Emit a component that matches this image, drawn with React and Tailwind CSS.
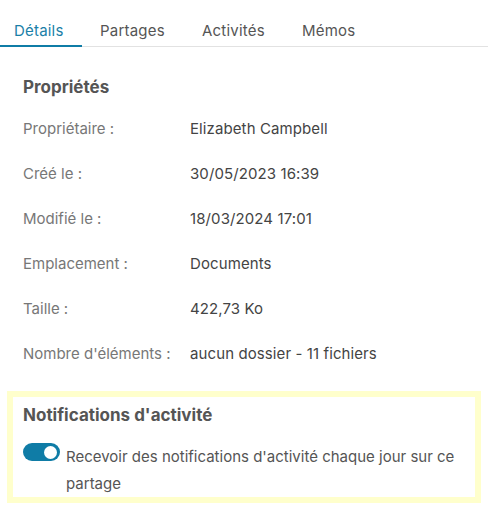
const TABS = [
  { label: "Détails", w: "w-[82px]" },
  { label: "Partages", w: "w-[102px]" },
  { label: "Activités", w: "w-[100px]" },
  { label: "Mémos", w: "w-[90px]" },
];

const PROPRIETES = [
  ["Propriétaire :", "Elizabeth Campbell"],
  ["Créé le :", "30/05/2023 16:39"],
  ["Modifié le :", "18/03/2024 17:01"],
  ["Emplacement :", "Documents"],
  ["Taille :", "422,73 Ko"],
  ["Nombre d'éléments :", "aucun dossier - 11 fichiers"],
];

export default function App() {
  return (
    <div className="w-[488px] h-[511px] bg-white font-['Inter',sans-serif] text-[#555]">
      {/* Onglets */}
      <div className="flex h-[47px] border-b border-[#e2e2e2] pt-[20px]">
        {TABS.map((t, i) => (
          <div
            key={t.label}
            className={
              i === 0
                ? "w-[82px] pl-[14px] text-[15px] tracking-[0.2px] text-[#1a7fa8] border-b-2 border-[#0f7ca6] -mb-px"
                : `${t.w} pl-[18px] text-[15px] tracking-[0.2px] text-[#555]`
            }
          >
            {t.label}
          </div>
        ))}
      </div>

      <div className="px-[23px] pt-[28px]">
        <h3 className="text-[17px] font-bold text-[#555] leading-[24px]">Propriétés</h3>
        <div className="mt-[20px]">
          {PROPRIETES.map(([k, v]) => (
            <div key={k} className="flex h-[45px] items-start text-[15px] leading-[20px]">
              <span className="w-[167px] text-[#777]">{k}</span>
              <span className="text-[#444] tracking-[0.1px]">{v}</span>
            </div>
          ))}
        </div>
      </div>

      <div className="mx-[7px] mt-[2px] border-[6px] border-[#ffffcc] px-[10px] pt-[6px] pb-0">
        <h3 className="text-[17px] font-bold text-[#555] leading-[24px]">Notifications d'activité</h3>
        <div className="flex items-start mt-[16px]">
          <div className="w-[37px] h-[18px] shrink-0 rounded-full bg-[#0f7ca6] flex items-center justify-end pr-[3px] mr-[6px]">
            <div className="w-[13px] h-[13px] rounded-full bg-white" />
          </div>
          <p className="text-[15px] leading-[27px] text-[#555]">
            Recevoir des notifications d'activité chaque jour sur ce partage
          </p>
        </div>
      </div>
    </div>
  );
}
